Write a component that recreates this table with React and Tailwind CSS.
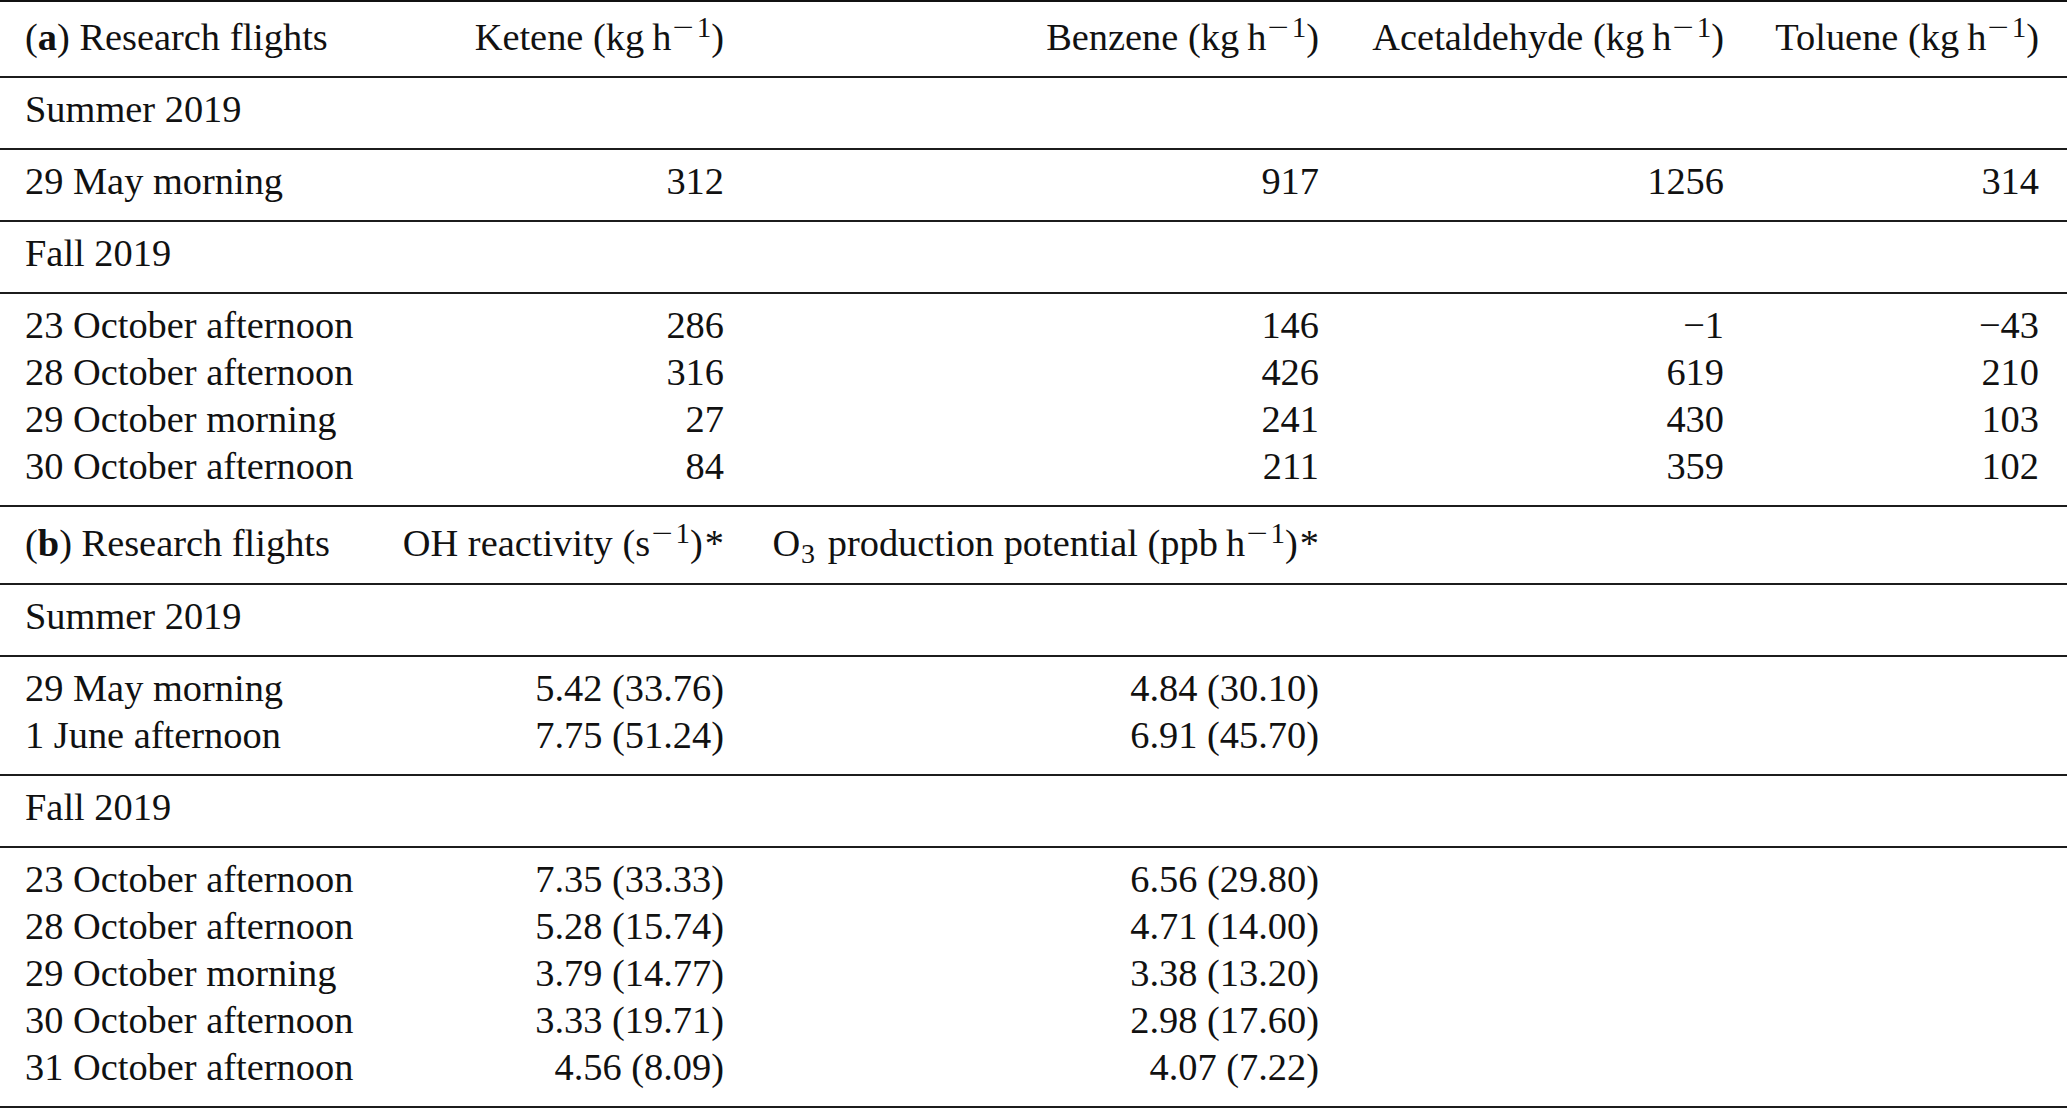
import React from "react";

const Sup = ({ children }) => (
  <span className="relative -top-[13px] text-[29px] leading-none">
    <span className="inline-block ml-[4px] mr-[5px] scale-x-[1.3]">−</span>
    {children}
  </span>
);
const Sub = ({ children }) => (
  <span className="relative top-[7px] text-[28px] leading-none ml-[1px] mr-[3px]">{children}</span>
);
const Thin = () => <span className="inline-block w-[8px]" />;
const U = () => (
  <>
    kg
    <Thin />h<Sup>1</Sup>
  </>
);
const Star = () => <span className="ml-[2px]">*</span>;

const GRID = "grid grid-cols-[380px_344px_595px_405px_343px] leading-[47px] h-[47px]";

function Row({ cells }) {
  return (
    <div className={GRID}>
      <div className="pl-[25px] whitespace-nowrap">{cells[0]}</div>
      <div className="text-right whitespace-nowrap">{cells[1]}</div>
      <div className="text-right whitespace-nowrap">{cells[2]}</div>
      <div className="text-right whitespace-nowrap">{cells[3]}</div>
      <div className="text-right pr-[28px] whitespace-nowrap">{cells[4]}</div>
    </div>
  );
}

function Group({ rows, header, hb }) {
  const pad = header
    ? hb
      ? "pt-[13px] pb-[16px]"
      : "pt-[12px] pb-[15px]"
    : "pt-[8px] pb-[15px]";
  return (
    <div className={`${pad} border-b-2 border-[#1c1c1c]`}>
      {rows.map((r, i) => (
        <Row key={i} cells={r} />
      ))}
    </div>
  );
}

export default function App() {
  return (
    <div className="w-[2067px] min-h-[1109px] bg-white text-[#111] text-[38.4px] font-['Liberation_Serif','Times_New_Roman',serif]">
      <div className="border-t-2 border-[#111]">
        <Group
          header
          rows={[
            [
              <>
                (<b>a</b>) Research flights
              </>,
              <>
                Ketene (<U />)
              </>,
              <>
                Benzene (<U />)
              </>,
              <>
                Acetaldehyde (<U />)
              </>,
              <>
                Toluene (<U />)
              </>,
            ],
          ]}
        />
        <Group rows={[["Summer 2019", "", "", "", ""]]} />
        <Group rows={[["29 May morning", "312", "917", "1256", "314"]]} />
        <Group rows={[["Fall 2019", "", "", "", ""]]} />
        <Group
          rows={[
            ["23 October afternoon", "286", "146", "−1", "−43"],
            ["28 October afternoon", "316", "426", "619", "210"],
            ["29 October morning", "27", "241", "430", "103"],
            ["30 October afternoon", "84", "211", "359", "102"],
          ]}
        />
        <Group
          header
          hb
          rows={[
            [
              <>
                (<b>b</b>) Research flights
              </>,
              <>
                OH reactivity (s<Sup>1</Sup>)
                <Star />
              </>,
              <>
                O<Sub>3</Sub> production potential (ppb
                <Thin />h<Sup>1</Sup>)
                <Star />
              </>,
              "",
              "",
            ],
          ]}
        />
        <Group rows={[["Summer 2019", "", "", "", ""]]} />
        <Group
          rows={[
            ["29 May morning", "5.42 (33.76)", "4.84 (30.10)", "", ""],
            ["1 June afternoon", "7.75 (51.24)", "6.91 (45.70)", "", ""],
          ]}
        />
        <Group rows={[["Fall 2019", "", "", "", ""]]} />
        <Group
          rows={[
            ["23 October afternoon", "7.35 (33.33)", "6.56 (29.80)", "", ""],
            ["28 October afternoon", "5.28 (15.74)", "4.71 (14.00)", "", ""],
            ["29 October morning", "3.79 (14.77)", "3.38 (13.20)", "", ""],
            ["30 October afternoon", "3.33 (19.71)", "2.98 (17.60)", "", ""],
            ["31 October afternoon", "4.56 (8.09)", "4.07 (7.22)", "", ""],
          ]}
        />
      </div>
    </div>
  );
}
